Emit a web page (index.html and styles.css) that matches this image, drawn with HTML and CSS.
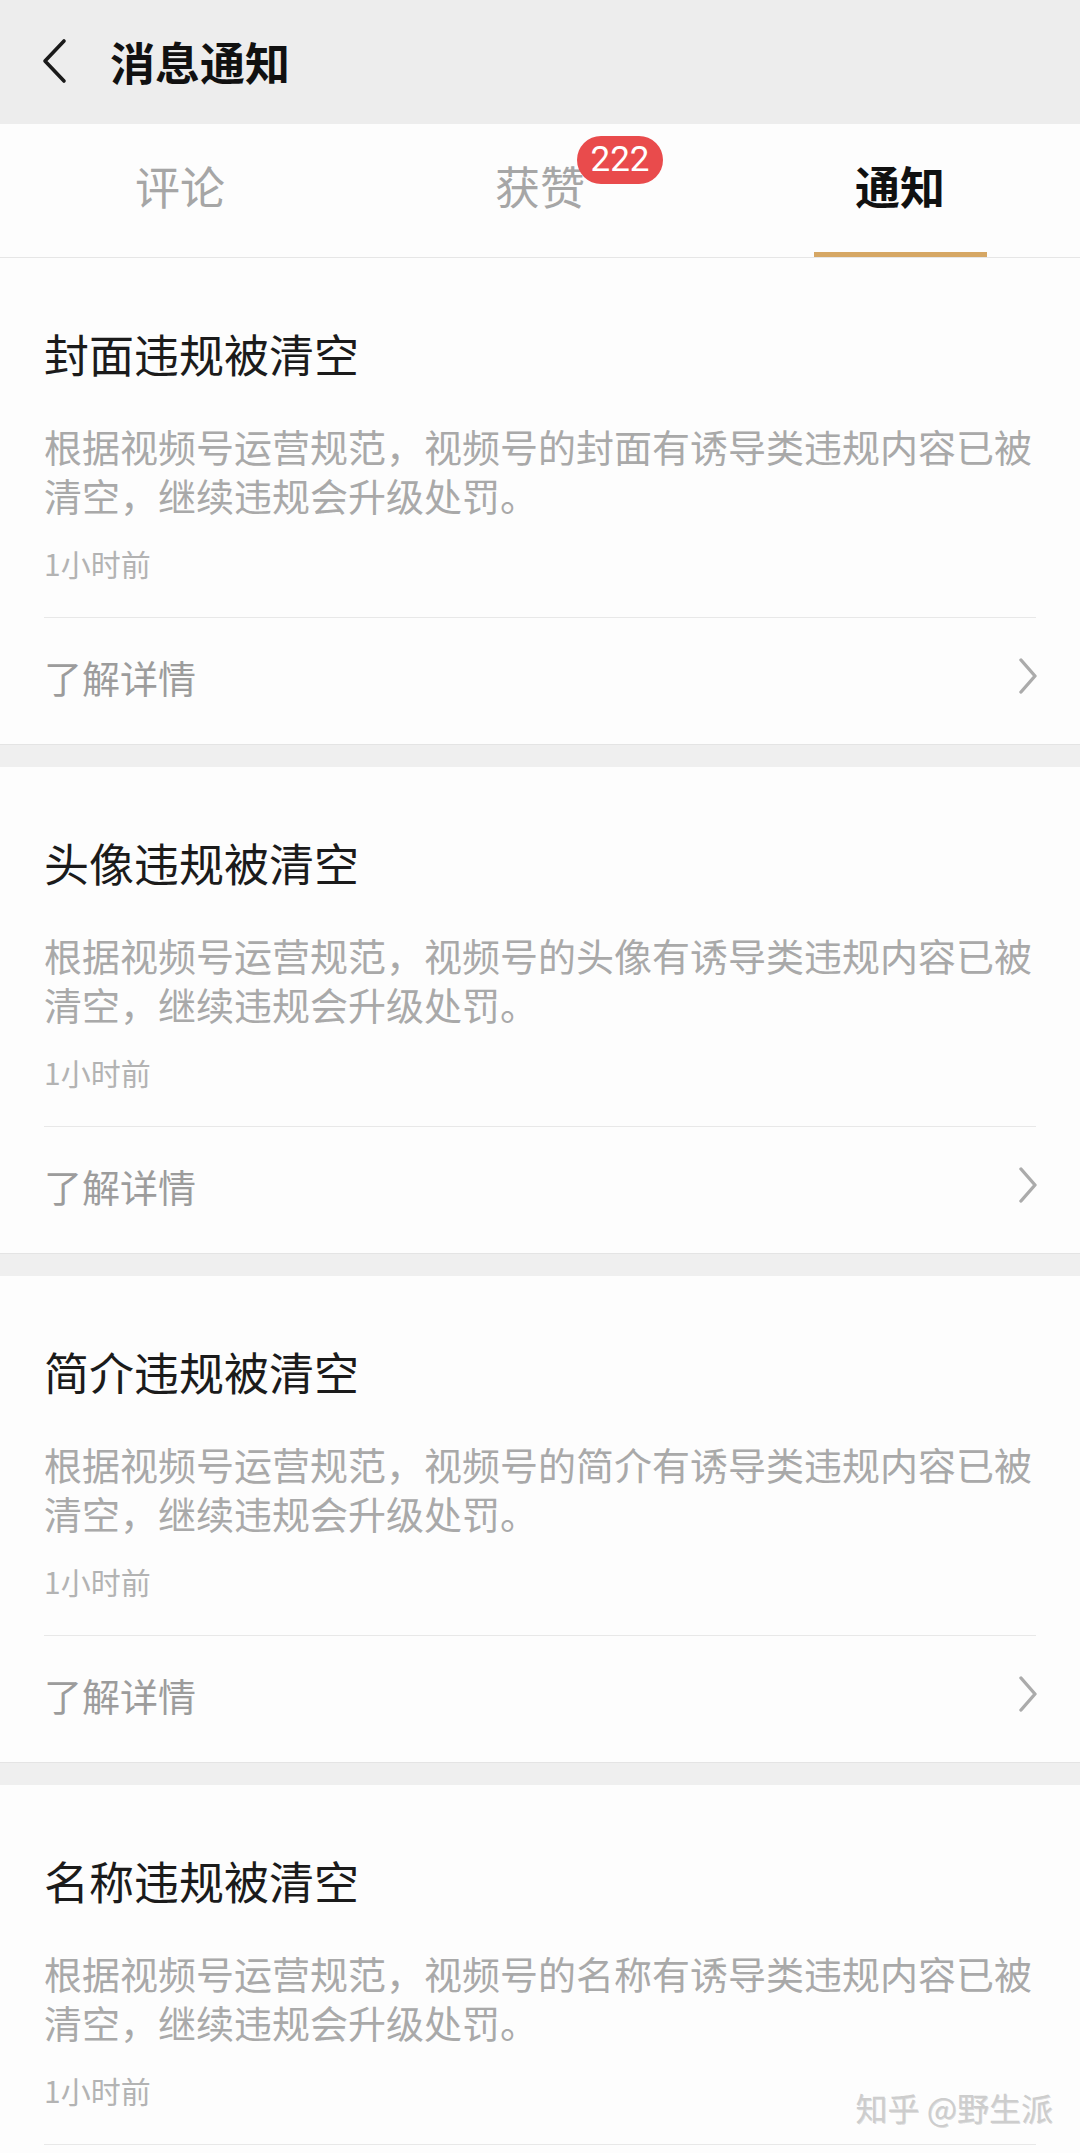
FILE: index.html
```html
<!DOCTYPE html>
<html lang="zh-CN">
<head>
  <meta charset="UTF-8" />
  <meta name="viewport" content="width=device-width, initial-scale=1" />
  <title>消息通知</title>
  <link rel="stylesheet" href="styles.css">
</head>
<body>
  <header class="topbar">
    <svg class="back" width="28" height="46" viewBox="0 0 28 46">
      <polyline points="24,3 5,23 24,43" fill="none" stroke="#1a1a1a" stroke-width="3.6" stroke-linecap="round" stroke-linejoin="round" />
    </svg>
    <h1>消息通知</h1>
  </header>

  <nav class="tabs">
    <div class="tab">
      <span class="tab-label">评论</span>
      <span class="indicator"></span>
    </div>
    <div class="tab">
      <span class="tab-label">获赞<span class="badge">222</span></span>
      <span class="indicator"></span>
    </div>
    <div class="tab active">
      <span class="tab-label">通知</span>
      <span class="indicator"></span>
    </div>
  </nav>

  <main class="list">
    <section class="card">
      <h2>封面违规被清空</h2>
      <p class="desc">根据视频号运营规范，视频号的封面有诱导类违规内容已被清空，继续违规会升级处罚。</p>
      <p class="time">1小时前</p>
      <div class="more">
        <span>了解详情</span>
        <svg width="20" height="36" viewBox="0 0 20 36"><polyline points="3,2 17,18 3,34" fill="none" stroke="#ababab" stroke-width="3.4" stroke-linecap="round" stroke-linejoin="round" /></svg>
      </div>
    </section>

    <section class="card">
      <h2>头像违规被清空</h2>
      <p class="desc">根据视频号运营规范，视频号的头像有诱导类违规内容已被清空，继续违规会升级处罚。</p>
      <p class="time">1小时前</p>
      <div class="more">
        <span>了解详情</span>
        <svg width="20" height="36" viewBox="0 0 20 36"><polyline points="3,2 17,18 3,34" fill="none" stroke="#ababab" stroke-width="3.4" stroke-linecap="round" stroke-linejoin="round" /></svg>
      </div>
    </section>

    <section class="card">
      <h2>简介违规被清空</h2>
      <p class="desc">根据视频号运营规范，视频号的简介有诱导类违规内容已被清空，继续违规会升级处罚。</p>
      <p class="time">1小时前</p>
      <div class="more">
        <span>了解详情</span>
        <svg width="20" height="36" viewBox="0 0 20 36"><polyline points="3,2 17,18 3,34" fill="none" stroke="#ababab" stroke-width="3.4" stroke-linecap="round" stroke-linejoin="round" /></svg>
      </div>
    </section>

    <!-- last card runs past the bottom of the screen -->
    <section class="card cut">
      <h2>名称违规被清空</h2>
      <p class="desc">根据视频号运营规范，视频号的名称有诱导类违规内容已被清空，继续违规会升级处罚。</p>
      <p class="time">1小时前</p>
    </section>
  </main>

  <div class="watermark">知乎 @野生派</div>
</body>
</html>
```

FILE: styles.css
```css
body {
  margin: 0;
  background: #efefef;
  font-family: "Noto Sans CJK SC", "Noto Sans", sans-serif;
  color: #1b1b1b;
  position: relative;
}
.topbar {
  height: 124px;
  background: #ededed;
  display: flex;
  align-items: center;
  padding-left: 40px;
  gap: 42px;
  box-sizing: border-box;
}
.topbar .back {
  flex-shrink: 0;
  margin-top: -2px;
}
.topbar h1 {
  margin: 0;
  font-size: 45px;
  font-weight: 600;
  line-height: 60px;
  color: #111;
}

/* tabs */
.tabs {
  display: grid;
  grid-template-columns: repeat(3, 1fr);
  height: 133px;
  background: #fdfdfd;
  border-bottom: 1px solid #e6e6e6;
}
.tab {
  display: flex;
  flex-direction: column;
  align-items: center;
  justify-content: flex-end;
}
.tab-label {
  position: relative;
  font-size: 45px;
  line-height: 60px;
  color: #a6a6a6;
  margin-bottom: 36px;
}
.tab.active .tab-label {
  color: #111;
  font-weight: 600;
}
.indicator {
  width: 173px;
  height: 5px;
  background: transparent;
}
.tab.active .indicator {
  background: #d6a764;
}
.badge {
  position: absolute;
  left: calc(100% - 8px);
  top: -20px;
  height: 48px;
  min-width: 86px;
  box-sizing: border-box;
  border-radius: 24px;
  background: #e94b4c;
  color: #fff;
  font-family: Roboto, "Noto Sans", sans-serif;
  font-size: 35px;
  line-height: 48px;
  text-align: center;
  font-weight: 400;
}

/* cards */
.list {
  display: flex;
  flex-direction: column;
  gap: 22px;
}
.card {
  background: #fdfdfd;
  padding: 66px 44px 0;
  border-bottom: 1px solid #e4e4e4;
}
.card.cut {
  padding-bottom: 60px;
  border-bottom: 0;
}
.card h2 {
  margin: 0;
  font-size: 45px;
  line-height: 60px;
  font-weight: 400;
  color: #1b1b1b;
}
.desc {
  margin: 37px 0 0;
  font-size: 38px;
  line-height: 49px;
  color: #a9a9a9;
}
.time {
  margin: 24px 0 0;
  font-size: 30px;
  line-height: 40px;
  color: #b3b3b3;
  padding-bottom: 34px;
  border-bottom: 1px solid #e8e8e8;
}
.more {
  display: flex;
  justify-content: space-between;
  align-items: center;
  height: 116px;
  padding-bottom: 10px;
  font-size: 38px;
  color: #9c9c9c;
}
.more svg {
  margin-right: -2px;
}

.watermark {
  position: absolute;
  top: 2087px;
  right: 27px;
  font-size: 32px;
  line-height: 40px;
  font-weight: 400;
  color: #cdcdcd;
  text-shadow: 1px 1px 0 rgba(0, 0, 0, 0.12);
}
```
